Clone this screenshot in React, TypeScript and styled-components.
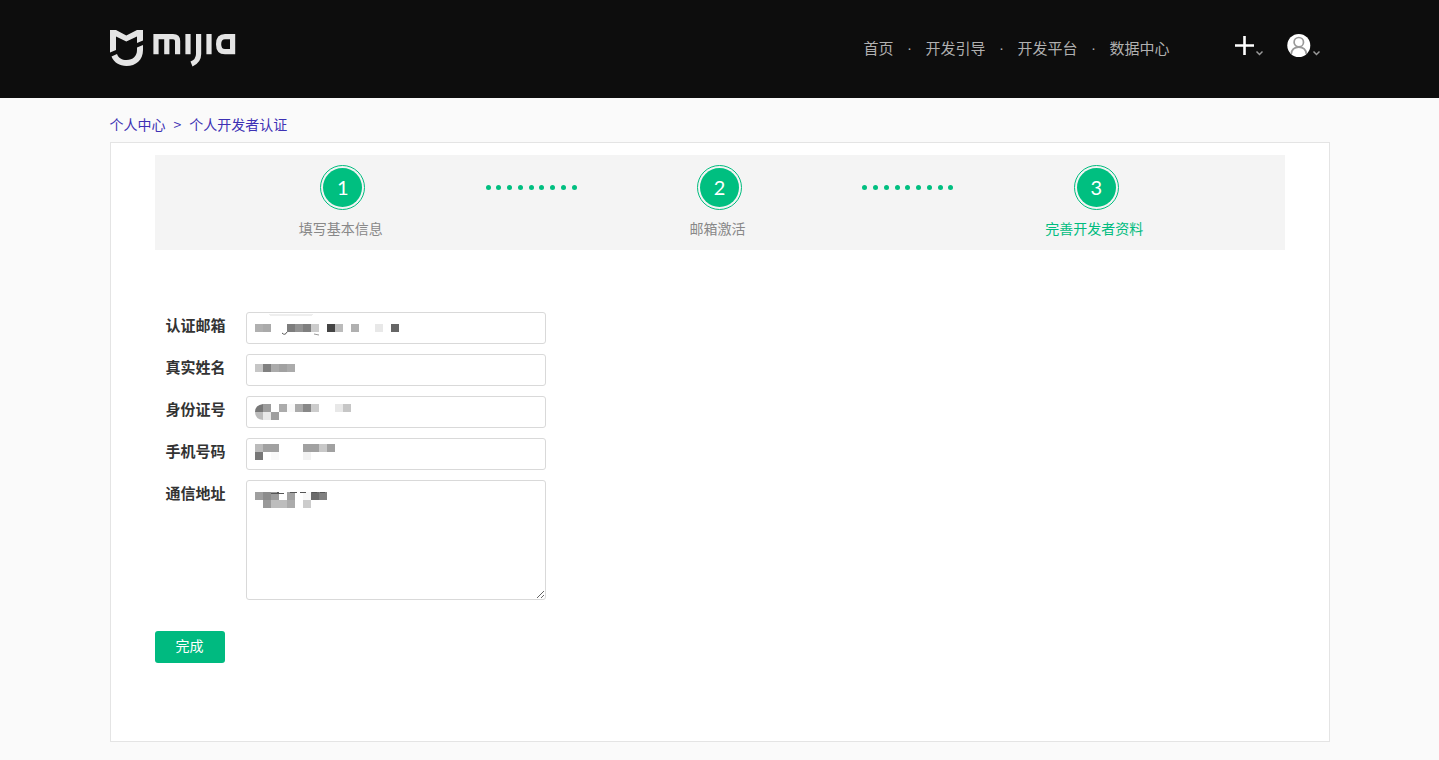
import React from "react";
import styled, { createGlobalStyle } from "styled-components";

const GlobalStyle = createGlobalStyle`
  * { box-sizing: border-box; }
  body {
    margin: 0;
    background: #fafafa;
    color: #333;
    font-family: "Noto Sans CJK SC", sans-serif;
    font-size: 14px;
    line-height: 20px;
  }
`;

const Header = styled.header`
  background: #0d0d0d;
`;

const Container = styled.div`
  max-width: 1220px;
  margin: 0 auto;
`;

const HeaderInner = styled(Container)`
  display: flex;
  align-items: center;
  height: 98px;
  padding-right: 10px;
`;

const LogoLink = styled.a`
  display: block;
  height: 38px;
  margin-right: auto;
`;

const Nav = styled.nav`
  display: flex;
  margin-right: 65px;
  padding-bottom: 2px;
  font-size: 15px;
  color: #b0b0b0;
`;

const NavLink = styled.a`
  color: inherit;
  text-decoration: none;
`;

const NavDot = styled.span`
  width: 32px;
  font-family: "Liberation Sans", sans-serif;
  text-align: center;
`;

const Tools = styled.div`
  display: flex;
  gap: 24px;
  padding-bottom: 7px;
`;

const ToolButton = styled.button`
  display: flex;
  align-items: center;
  padding: 0;
  border: 0;
  background: none;
`;

const Breadcrumb = styled.nav`
  display: flex;
  gap: 8px;
  padding: 16px 0 8px;
  color: #3d31b4;
`;

const Crumb = styled.a`
  color: inherit;
  text-decoration: none;
`;

const Panel = styled.main`
  min-height: 600px;
  padding: 12px 44px;
  border: 1px solid #e4e4e4;
  background: #fff;
`;

const Steps = styled.div`
  display: grid;
  grid-template-columns: repeat(5, 1fr);
  padding: 10px 94px 12px;
  margin-bottom: 62px;
  background: #f4f4f4;
`;

const Step = styled.div`
  display: flex;
  flex-direction: column;
  align-items: center;
  gap: 8px;
`;

const StepRing = styled.div`
  width: 45px;
  height: 45px;
  padding: 2px;
  border: 1px solid #00bc7e;
  border-radius: 50%;
`;

const StepNumber = styled.div`
  height: 39px;
  border-radius: 50%;
  background: #00bf80;
  color: #fff;
  font: 20px/38px Lato, sans-serif;
  text-align: center;
`;

const StepLabel = styled.div<{ $active?: boolean }>`
  padding-right: 4px;
  white-space: nowrap;
  color: ${(p) => (p.$active ? "#00bc7e" : "#888")};
`;

const Dots = styled.div`
  display: flex;
  justify-content: space-between;
  justify-self: center;
  align-items: center;
  width: 91px;
  height: 45px;
`;

const Dot = styled.span`
  width: 5px;
  height: 5px;
  border-radius: 50%;
  background: #00bf80;
`;

const Form = styled.form`
  display: flex;
  flex-direction: column;
  gap: 10px;
`;

const Field = styled.div`
  display: flex;
  gap: 20px;
`;

const Label = styled.label`
  width: 71px;
  font-size: 15px;
  font-weight: 700;
  line-height: 26px;
  text-align: right;
`;

const Control = styled.div`
  position: relative;
  display: flex;
  width: 300px;
`;

const Input = styled.input`
  width: 100%;
  height: 32px;
  padding: 0 8px;
  border: 1px solid #d9d9d9;
  border-radius: 3px;
  background: #fff;
  font: inherit;
`;

const TextArea = styled.textarea`
  width: 100%;
  height: 120px;
  padding: 8px;
  border: 1px solid #d9d9d9;
  border-radius: 3px;
  background: #fff;
  font: inherit;
`;

const MosaicLayer = styled.svg`
  position: absolute;
  top: 0;
  left: 0;
  pointer-events: none;
`;

const Submit = styled.button`
  align-self: flex-start;
  width: 70px;
  height: 32px;
  margin-top: 21px;
  padding: 0 0 4px;
  border: 0;
  border-radius: 3px;
  background: #00ba80;
  color: #fff;
  font: inherit;
`;

type Cell = [x: number, y: number, color: string];

/* Masked personal data: 8px blocks placed inside the control's box. */
const Mosaic = ({ cells, children }: { cells: Cell[]; children?: React.ReactNode }) => (
  <MosaicLayer width="180" height="32" aria-hidden="true" shapeRendering="crispEdges">
    {cells.map(([x, y, color]) => (
      <rect key={`${x}-${y}`} x={x} y={y} width="8" height="8" fill={color} />
    ))}
    {children}
  </MosaicLayer>
);

const EMAIL: Cell[] = [
  [9, 12, "#b0b0b0"], [17, 12, "#aaa"], [41, 12, "#7d7d7d"], [49, 12, "#929292"],
  [57, 12, "#7f7f7f"], [65, 12, "#ccc"], [81, 12, "#444"], [89, 12, "#bbb"],
  [105, 12, "#b0b0b0"], [129, 12, "#e8e8e8"], [145, 12, "#666"],
];
const NAME: Cell[] = [
  [9, 10, "#c6c6c6"], [17, 10, "#808080"], [25, 10, "#ababab"], [33, 10, "#a1a1a1"], [41, 10, "#ababab"],
];
const ID_CARD: Cell[] = [
  [17, 8, "#9c9c9c"], [33, 8, "#ababab"], [41, 8, "#f8f8f8"], [49, 8, "#ababab"],
  [57, 8, "#888"], [65, 8, "#ccc"], [89, 8, "#e8e8e8"], [97, 8, "#c6c6c6"],
  [17, 16, "#e8e8e8"], [25, 16, "#9f9f9f"],
];
const PHONE: Cell[] = [
  [9, 6, "#bbb"], [17, 6, "#a1a1a1"], [25, 6, "#a1a1a1"], [57, 6, "#a1a1a1"],
  [65, 6, "#a1a1a1"], [73, 6, "#c8c8c8"], [81, 6, "#a1a1a1"],
  [9, 14, "#777"], [25, 14, "#f9f9f9"], [57, 14, "#f2f2f2"],
];
const ADDRESS: Cell[] = [
  [9, 12, "#9f9f9f"], [17, 12, "#8c8c8c"], [25, 12, "#9b9b9b"], [41, 12, "#a1a1a1"],
  [57, 12, "#f8f8f8"], [65, 12, "#6c6c6c"], [73, 12, "#808080"],
  [17, 20, "#999"], [25, 20, "#bdbdbd"], [33, 20, "#bdbdbd"], [41, 20, "#ababab"], [57, 20, "#ccc"],
];

const Logo = () => (
  <svg width="126" height="37" viewBox="0 0 126 37" fill="none" display="block" aria-hidden="true">
    <path
      fill="#e4e4e4"
      d="M0 0H6L16.300 5.500 27 0H33V10.500L27 13V6.500L16.300 11.500 6 6.500V20L0 22.500Z"
    />
    <path
      fill="#e4e4e4"
      d="M33 15V20C33 30 26 36 16.500 36C9.500 36 4 32.500 1.500 26.500L7 24C8.500 28 12 30 16.500 30C23 30 27 26 27 20V17.500Z"
    />
    <g stroke="#e4e4e4" strokeWidth="5.200">
      <path d="M46 24.300V6.600H63Q67.600 6.600 67.600 11V24.300M56.800 6.600V24.300" />
      <path d="M78 4V24.300M88.600 4V24Q88.600 31 81.500 34M99 4V24.300" />
      <path d="M122.600 24.300V6.600H115Q108.600 6.600 108.600 14.200Q108.600 21.700 115 21.700H122.600" />
    </g>
  </svg>
);

const Plus = () => (
  <svg width="19" height="23" viewBox="0 0 19 23" aria-hidden="true">
    <path d="M9.500 2V21M0 11.500H19" stroke="#fff" strokeWidth="2.600" fill="none" />
  </svg>
);

const Avatar = () => (
  <svg width="24" height="23" viewBox="0 0 24 23" aria-hidden="true">
    <circle cx="11.800" cy="11.500" r="11.500" fill="#fff" />
    <g fill="none" stroke="#999" strokeWidth="1.700">
      <circle cx="11.800" cy="8.200" r="4.700" />
      <path d="M4.300 20Q4.800 13.200 11.800 13.200T19.300 20" />
    </g>
  </svg>
);

const Chevron = () => (
  <svg width="9" height="23" viewBox="0 0 9 23" aria-hidden="true">
    <path d="M2.500 17.500L5.500 20.500 8.500 17.500" stroke="#999" strokeWidth="1.500" fill="none" />
  </svg>
);

const LINKS = ["首页", "开发引导", "开发平台", "数据中心"];
const STEPS = ["填写基本信息", "邮箱激活", "完善开发者资料"];

const Connector = () => (
  <Dots aria-hidden="true">
    {Array.from({ length: 9 }, (_, i) => (
      <Dot key={i} />
    ))}
  </Dots>
);

export default function App() {
  return (
    <>
      <GlobalStyle />
      <Header>
        <HeaderInner>
          <LogoLink href="#" aria-label="mijia">
            <Logo />
          </LogoLink>
          <Nav>
            {LINKS.map((text, i) => (
              <React.Fragment key={text}>
                {i > 0 && <NavDot>·</NavDot>}
                <NavLink href="#">{text}</NavLink>
              </React.Fragment>
            ))}
          </Nav>
          <Tools>
            <ToolButton type="button" aria-label="新建">
              <Plus />
              <Chevron />
            </ToolButton>
            <ToolButton type="button" aria-label="账号">
              <Avatar />
              <Chevron />
            </ToolButton>
          </Tools>
        </HeaderInner>
      </Header>
      <Container>
        <Breadcrumb>
          <Crumb href="#">个人中心</Crumb>
          <span>&gt;</span>
          <Crumb href="#">个人开发者认证</Crumb>
        </Breadcrumb>
        <Panel>
          <Steps>
            {STEPS.map((text, i) => (
              <React.Fragment key={text}>
                {i > 0 && <Connector />}
                <Step>
                  <StepRing>
                    <StepNumber>{i + 1}</StepNumber>
                  </StepRing>
                  <StepLabel $active={i === 2}>{text}</StepLabel>
                </Step>
              </React.Fragment>
            ))}
          </Steps>
          <Form>
            <Field>
              <Label htmlFor="email">认证邮箱</Label>
              <Control>
                <Input id="email" type="text" />
                <Mosaic cells={EMAIL}>
                  <ellipse cx="45" cy="3" rx="25" ry="1" fill="#eee" />
                  <path d="M36 21Q39 24 41 20" stroke="#555" fill="none" shapeRendering="auto" />
                  <path d="M68 22L73 23" stroke="#999" fill="none" shapeRendering="auto" />
                </Mosaic>
              </Control>
            </Field>
            <Field>
              <Label htmlFor="name">真实姓名</Label>
              <Control>
                <Input id="name" type="text" />
                <Mosaic cells={NAME} />
              </Control>
            </Field>
            <Field>
              <Label htmlFor="idcard">身份证号</Label>
              <Control>
                <Input id="idcard" type="text" />
                <Mosaic cells={ID_CARD}>
                  <path d="M17 8Q9 9 9 16H17Z" fill="#777" shapeRendering="auto" />
                  <path d="M9 16Q9 23 17 24V16Z" fill="#bbb" shapeRendering="auto" />
                </Mosaic>
              </Control>
            </Field>
            <Field>
              <Label htmlFor="phone">手机号码</Label>
              <Control>
                <Input id="phone" type="text" />
                <Mosaic cells={PHONE} />
              </Control>
            </Field>
            <Field>
              <Label htmlFor="address">通信地址</Label>
              <Control>
                <TextArea id="address" />
                <Mosaic cells={ADDRESS}>
                  <path d="M25 13.500H38M44 12.500H51M54 12.500H60M66 12.500H71M74 12.500H79" stroke="#555" />
                  <path d="M31 12H33V13H31Z" fill="#555" />
                </Mosaic>
              </Control>
            </Field>
            <Submit type="button">完成</Submit>
          </Form>
        </Panel>
      </Container>
    </>
  );
}
